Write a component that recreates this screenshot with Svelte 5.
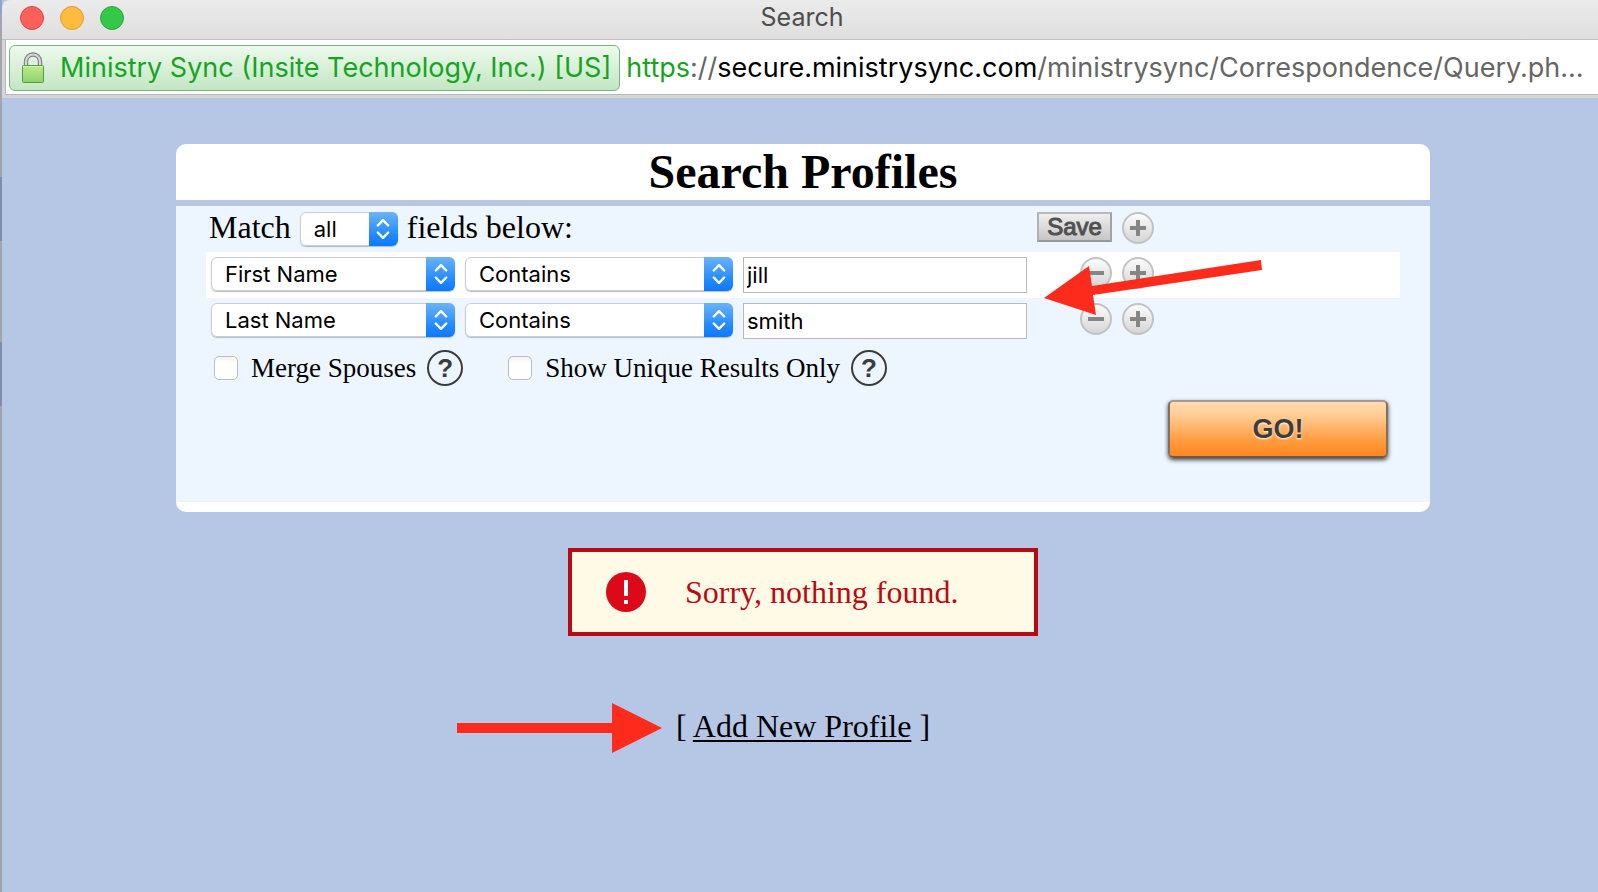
<script lang="ts">
	interface Filter {
		id: number;
		field: string;
		operator: string;
		value: string;
	}

	const fields = ['First Name', 'Last Name'];
	const operators = ['Contains'];

	let match = $state('all');
	let mergeSpouses = $state(false);
	let uniqueOnly = $state(false);
	let nextId = 3;
	let filters = $state<Filter[]>([
		{ id: 1, field: 'First Name', operator: 'Contains', value: 'jill' },
		{ id: 2, field: 'Last Name', operator: 'Contains', value: 'smith' }
	]);

	function addFilter(index: number) {
		filters.splice(index, 0, { id: nextId++, field: 'First Name', operator: 'Contains', value: '' });
	}

	function removeFilter(index: number) {
		filters.splice(index, 1);
	}
</script>

{#snippet chevrons()}
	<span class="chevrons">
		<svg width="14" height="22" viewBox="0 0 14 22" fill="none" stroke="#fff" stroke-width="2.4" stroke-linecap="round" stroke-linejoin="round">
			<path d="M1.8 7.5 7 2.2l5.2 5.3M1.8 14.5 7 19.8l5.2-5.3"></path>
		</svg>
	</span>
{/snippet}

{#snippet roundIcon(plus: boolean)}
	<svg width="32" height="32" viewBox="0 0 32 32">
		<defs>
			<linearGradient id="round-fill" x1="0" y1="0" x2="0" y2="1">
				<stop offset="0" stop-color="#fdfdfd"></stop>
				<stop offset="1" stop-color="#d4d4d4"></stop>
			</linearGradient>
		</defs>
		<circle cx="16" cy="16" r="15" fill="url(#round-fill)" stroke="#c2c2c2" stroke-width="2"></circle>
		<path d={plus ? 'M8 16h16M16 8v16' : 'M8 16h16'} stroke="#858585" stroke-width="4"></path>
	</svg>
{/snippet}

<div class="window">
	<header class="titlebar">
		<div class="lights">
			<button class="light close" aria-label="Close"></button>
			<button class="light minimize" aria-label="Minimize"></button>
			<button class="light zoom" aria-label="Zoom"></button>
		</div>
		<span class="window-title">Search</span>
	</header>

	<div class="address">
		<div class="certificate">
			<svg width="24" height="32" viewBox="0 0 24 32">
				<defs>
					<linearGradient id="lock-fill" x1="0" y1="0" x2="0" y2="1">
						<stop offset="0" stop-color="#b9ee8e"></stop>
						<stop offset="1" stop-color="#93cf6c"></stop>
					</linearGradient>
				</defs>
				<path d="M5 14V9.5a7 7 0 0 1 14 0V14" fill="none" stroke="#7d7d7d" stroke-width="4.4"></path>
				<path d="M5 14V9.5a7 7 0 0 1 14 0V14" fill="none" stroke="#d6d6d6" stroke-width="2.2"></path>
				<rect x="1.5" y="13.5" width="21" height="17" rx="1" fill="url(#lock-fill)" stroke="#5c9a3c"></rect>
				<path d="M2 14.5h20" stroke="#d3f7b4"></path>
			</svg>
			<span>Ministry Sync (Insite Technology, Inc.) [US]</span>
		</div>
		<div class="url"><span class="scheme">https</span>://<span class="host">secure.ministrysync.com</span>/ministrysync/Correspondence/Query.ph...</div>
	</div>

	<main>
		<form class="card" onsubmit={(e) => e.preventDefault()}>
			<h1>Search Profiles</h1>
			<div class="card-body">
				<div class="row">
					<div class="match">
						<label for="match">Match</label>
						<span class="select match-select">
							<select id="match" bind:value={match}>
								<option>all</option>
								<option>any</option>
							</select>
							{@render chevrons()}
						</span>
						<span>fields below:</span>
					</div>
					<div class="actions">
						<button type="button" class="save">Save</button>
						<button type="button" class="round" aria-label="Add field" onclick={() => addFilter(0)}>{@render roundIcon(true)}</button>
					</div>
				</div>

				{#each filters as filter, i (filter.id)}
					<div class="row filter">
						<span class="select">
							<select aria-label="Field" bind:value={filter.field}>
								{#each fields as field}
									<option>{field}</option>
								{/each}
							</select>
							{@render chevrons()}
						</span>
						<span class="select">
							<select aria-label="Operator" bind:value={filter.operator}>
								{#each operators as operator}
									<option>{operator}</option>
								{/each}
							</select>
							{@render chevrons()}
						</span>
						<input type="text" aria-label="Value" bind:value={filter.value} />
						<div class="actions">
							<button type="button" class="round" aria-label="Remove field" onclick={() => removeFilter(i)}>{@render roundIcon(false)}</button>
							<button type="button" class="round" aria-label="Add field" onclick={() => addFilter(i + 1)}>{@render roundIcon(true)}</button>
						</div>
					</div>
				{/each}

				<div class="options">
					<div class="option">
						<input type="checkbox" id="merge" bind:checked={mergeSpouses} />
						<label for="merge">Merge Spouses</label>
						<button type="button" class="help">?</button>
					</div>
					<div class="option">
						<input type="checkbox" id="unique" bind:checked={uniqueOnly} />
						<label for="unique">Show Unique Results Only</label>
						<button type="button" class="help">?</button>
					</div>
				</div>

				<div class="submit">
					<button class="go">GO!</button>
				</div>
			</div>
			<svg class="arrow-fields" width="220" height="60" viewBox="0 0 220 60" fill="#fc2b1c">
				<path d="M0 38 45 6l3 20L217 0l1 10L49 35l3 20z"></path>
			</svg>
		</form>

		<div class="alert" role="alert">
			<svg width="40" height="40" viewBox="0 0 40 40">
				<circle cx="20" cy="20" r="20" fill="#dc0a18"></circle>
				<path d="M20 8v16M20 28v4" stroke="#fff" stroke-width="4"></path>
			</svg>
			<span>Sorry, nothing found.</span>
		</div>

		<p class="add">
			<svg class="arrow-add" width="205" height="50" viewBox="0 0 205 50" fill="#fc2b1c">
				<path d="M0 20h155V0l50 25-50 25V30H0z"></path>
			</svg>
			[ <a href="#add">Add New Profile</a> ]
		</p>
	</main>
</div>

<style>
	:global(body) {
		margin: 0;
		background: #b6c7e5;
	}

	.window {
		box-sizing: border-box;
		min-height: 100vh;
		border-left: 2px solid;
		border-image: linear-gradient(
				#8ea3cb 16px,
				#a3a5ab 16px 178px,
				#7f8da9 178px 242px,
				#a3a5ab 242px 342px,
				#7f8da9 342px 406px,
				#a3a5ab 406px
			)
			2;
		background: #b6c7e5;
		color: #000;
		font-family: 'Liberation Serif', 'Times New Roman', serif;
		font-size: 32px;
	}

	button {
		padding: 0;
		border: 0;
		background: none;
		color: inherit;
		font: inherit;
	}

	.titlebar {
		display: grid;
		grid-template-columns: 1fr auto 1fr;
		align-items: start;
		height: 39px;
		border-bottom: 1px solid #bfc1c4;
		border-top-left-radius: 8px;
		background: linear-gradient(#ebebeb, #dfdfdf);
	}

	.lights {
		display: flex;
		gap: 16px;
		padding: 6px 0 0 18px;
	}

	.light {
		box-sizing: border-box;
		width: 24px;
		height: 24px;
		border: 1px solid;
		border-radius: 50%;
	}

	.close {
		border-color: #e2463f;
		background: #fc605b;
	}

	.minimize {
		border-color: #dfa023;
		background: #fdbc40;
	}

	.zoom {
		border-color: #27aa35;
		background: #34c84a;
	}

	.window-title {
		padding-left: 4px;
		color: #4d4d4d;
		font: 25px/34px Inter, sans-serif;
	}

	.address {
		display: flex;
		align-items: center;
		gap: 6px;
		height: 47px;
		padding: 4px;
		border: solid #d6d6d6;
		border-width: 0 0 3px 3px;
		box-shadow: inset 1px -1px #b4b8c2;
		background: #fff;
		font: 27px/46px Inter, sans-serif;
		white-space: nowrap;
	}

	.certificate {
		display: flex;
		align-items: center;
		gap: 15px;
		height: 44px;
		padding: 0 8px 0 11px;
		border: 1px solid #74b878;
		border-radius: 6px;
		background: linear-gradient(#eef9ee, #c3e6c3);
		color: #15a51e;
	}

	.url {
		color: #666;
		overflow: hidden;
	}

	.scheme {
		color: #15a51e;
	}

	.host {
		color: #000;
	}

	main {
		display: flex;
		flex-direction: column;
		align-items: center;
		padding: 46px 0 46px 6px;
	}

	.card {
		position: relative;
		box-sizing: border-box;
		width: 100%;
		max-width: 1254px;
		border-bottom: 10px solid #fff;
		border-radius: 10px;
	}

	h1 {
		margin: 0;
		border-radius: 10px 10px 0 0;
		background: #fff;
		font-size: 48px;
		line-height: 56px;
		text-align: center;
	}

	.card-body {
		margin-top: 6px;
		padding: 0 30px 44px;
		background: #edf5ff;
	}

	.row {
		display: grid;
		box-sizing: border-box;
		grid-template-columns: 244px 268px 284px 117px;
		align-items: start;
		gap: 10px;
		height: 46px;
		padding: 6px 0 0 5px;
	}

	.filter {
		padding-top: 5px;
	}

	.filter:nth-child(even) {
		background: #fff;
	}

	.match {
		display: flex;
		grid-column: span 3;
		gap: 9px;
		margin-left: -2px;
		line-height: 30px;
	}

	.match-select {
		width: 98px;
	}

	.select {
		display: grid;
		grid-template-columns: 1fr 29px;
		height: 34px;
		border-radius: 6px;
		box-shadow: 0 1px 1px #b5bac2;
	}

	select {
		box-sizing: border-box;
		grid-area: 1 / 1 / 2 / 3;
		width: 100%;
		padding: 0 40px 0 13px;
		border: 1px solid #c9ced6;
		border-radius: 6px;
		appearance: none;
		background: #fff;
		color: #000;
		font: 22px/32px Inter, sans-serif;
	}

	.chevrons {
		display: flex;
		grid-area: 1 / 2;
		align-items: center;
		justify-content: center;
		border-radius: 0 6px 6px 0;
		background: linear-gradient(#6bb3fa, #2088fe 70%, #0e79ff);
		pointer-events: none;
	}

	input[type='text'] {
		box-sizing: border-box;
		width: 100%;
		height: 36px;
		padding: 0 3px;
		border: 1px solid #b9b9b9;
		background: #fff;
		color: #000;
		font: 22px/34px Inter, sans-serif;
	}

	.actions {
		display: flex;
		justify-content: flex-end;
		gap: 10px;
	}

	.save {
		box-sizing: border-box;
		width: 76px;
		height: 30px;
		border: 2px solid;
		border-color: #bababa #a2a2a2 #999 #b0b0b0;
		background: linear-gradient(#efefef, #c6c6c6);
		color: #505050;
		font: 24px/26px 'Liberation Sans', sans-serif;
		-webkit-text-stroke: 1px #505050;
	}

	.round {
		width: 32px;
		height: 32px;
	}

	.round svg {
		display: block;
	}

	.options {
		display: flex;
		gap: 45px;
		padding: 6px 8px;
		font-size: 27px;
		line-height: 36px;
	}

	.option {
		display: flex;
		align-items: center;
	}

	.option label {
		padding: 0 11px 0 13px;
	}

	input[type='checkbox'] {
		box-sizing: border-box;
		width: 24px;
		height: 24px;
		margin: 0;
		border: 1px solid #b9bcc0;
		border-radius: 5px;
		appearance: none;
		background: linear-gradient(#f4f4f4, #fff 30%);
	}

	input[type='checkbox']:checked {
		background: #2088fe;
	}

	.help {
		box-sizing: border-box;
		width: 36px;
		height: 36px;
		border: 2px solid #3c3c3c;
		border-radius: 50%;
		color: #3c3c3c;
		font: bold 26px/32px 'Liberation Sans', sans-serif;
	}

	.submit {
		display: flex;
		justify-content: flex-end;
		padding: 8px 12px 0;
	}

	.go {
		box-sizing: border-box;
		width: 220px;
		height: 58px;
		border: 2px solid;
		border-color: #a39a90 #83705e #6b5a4a;
		border-radius: 5px;
		background: linear-gradient(#ffdcb0, #ffcd95 25%, #ff9d40 70%, #ff8620);
		box-shadow: 0 2px 4px #444;
		color: #3c3c3c;
		font: bold 27px/54px 'Liberation Sans', sans-serif;
		text-shadow: 0 1px 2px #fff;
	}

	.arrow-fields {
		position: absolute;
		top: 116px;
		left: 868px;
	}

	.alert {
		display: flex;
		align-items: center;
		box-sizing: border-box;
		gap: 39px;
		width: 470px;
		height: 88px;
		margin-top: 36px;
		padding: 0 34px;
		border: 4px solid #b90a14;
		background: #fffae6;
		color: #b90a14;
	}

	.add {
		position: relative;
		margin: 70px 0 0;
		line-height: 40px;
	}

	.add a {
		color: #000;
		text-decoration-thickness: 2px;
		text-underline-offset: 3px;
	}

	.arrow-add {
		position: absolute;
		top: -3px;
		right: calc(100% + 14px);
	}
</style>
